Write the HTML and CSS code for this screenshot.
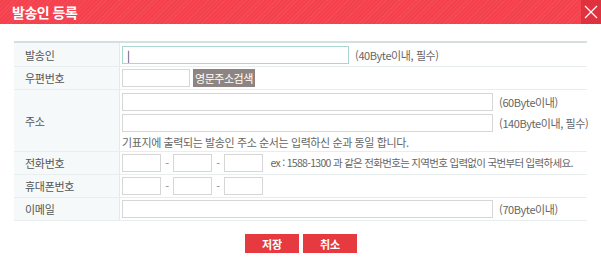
FILE: index.html
```html
<!DOCTYPE html>
<html lang="ko">
  <head>
    <meta charset="UTF-8" />
    <title>발송인 등록</title>
    <link rel="stylesheet" href="styles.css">
  </head>
  <body>
    <div class="pop-header">
      <h1>발송인 등록</h1>
      <button class="close-btn" type="button" aria-label="닫기">
        <svg width="14" height="14" viewBox="0 0 14 14">
          <path d="M1 1 L13 13 M13 1 L1 13" stroke="#fff" stroke-width="1.2" fill="none" />
        </svg>
      </button>
    </div>

    <div class="pop-body">
      <table class="form-table">
        <tr class="row-name">
          <th>발송인</th>
          <td>
            <input type="text" class="inp inp-name focus" value="|" />
            <span class="hint">(40Byte이내, 필수)</span>
          </td>
        </tr>
        <tr>
          <th>우편번호</th>
          <td>
            <input type="text" class="inp inp-zip" />
            <button type="button" class="btn-gray">영문주소검색</button>
          </td>
        </tr>
        <tr class="row-addr">
          <th>주소</th>
          <td>
            <div class="line">
              <input type="text" class="inp inp-long" />
              <span class="hint">(60Byte이내)</span>
            </div>
            <div class="line">
              <input type="text" class="inp inp-long" />
              <span class="hint">(140Byte이내, 필수)</span>
            </div>
            <p class="note">기표지에 출력되는 발송인 주소 순서는 입력하신 순과 동일 합니다.</p>
          </td>
        </tr>
        <tr>
          <th>전화번호</th>
          <td>
            <input type="text" class="inp inp-tel" />
            <span class="dash">-</span>
            <input type="text" class="inp inp-tel" />
            <span class="dash">-</span>
            <input type="text" class="inp inp-tel" />
            <span class="hint hint-tel">ex : 1588-1300 과 같은 전화번호는 지역번호 입력없이 국번부터 입력하세요.</span>
          </td>
        </tr>
        <tr>
          <th>휴대폰번호</th>
          <td>
            <input type="text" class="inp inp-tel" />
            <span class="dash">-</span>
            <input type="text" class="inp inp-tel" />
            <span class="dash">-</span>
            <input type="text" class="inp inp-tel" />
          </td>
        </tr>
        <tr>
          <th>이메일</th>
          <td>
            <input type="text" class="inp inp-long" />
            <span class="hint">(70Byte이내)</span>
          </td>
        </tr>
      </table>

      <div class="btn-area">
        <button type="button" class="btn-red">저장</button>
        <button type="button" class="btn-red">취소</button>
      </div>
    </div>
  </body>
</html>
```

FILE: styles.css
```css
body {
  margin: 0;
  background: #fff;
  font-family: "Noto Sans CJK KR", "Noto Sans", sans-serif;
  font-size: 11px;
  line-height: 14px;
  color: #555;
}
.pop-header {
  height: 24px;
  display: flex;
  align-items: center;
  justify-content: space-between;
  background-color: #f5404d;
  background-image: repeating-linear-gradient(
    -45deg,
    rgba(255, 255, 255, 0.06) 0,
    rgba(255, 255, 255, 0.06) 1px,
    transparent 1px,
    transparent 3px
  );
}
.pop-header h1 {
  margin: 0 0 0 12px;
  font-size: 14px;
  line-height: 18px;
  font-weight: bold;
  color: #fff;
  letter-spacing: -0.5px;
}
.close-btn {
  width: 20px;
  height: 24px;
  padding: 0;
  border: none;
  background: #e0313e;
  display: flex;
  align-items: center;
  justify-content: center;
  cursor: pointer;
}
.pop-body {
  padding: 17px 14px 0 14px;
}
.form-table {
  width: 573px;
  border-collapse: collapse;
  border-top: 2px solid #d5dfdf;
  table-layout: fixed;
}
.form-table th,
.form-table td {
  border-bottom: 1px solid #e8eded;
  padding: 0;
  height: 22px;
  white-space: nowrap;
}
.form-table th {
  width: 94px;
  padding-left: 11px;
  background: #f5f9f9;
  border-right: 1px solid #e3eaea;
  text-align: left;
  font-weight: normal;
  color: #555;
  letter-spacing: -0.3px;
}
.form-table td {
  padding-left: 2px;
}
.row-name td,
.row-name th {
  height: 23px;
}
.inp {
  box-sizing: border-box;
  height: 18px;
  margin: 0;
  padding: 0 4px;
  border: 1px solid #d6d6d6;
  background: #fff;
  font-family: inherit;
  font-size: 11px;
  line-height: 14px;
  color: #333;
  vertical-align: middle;
}
.inp.focus {
  border-color: #a9d6cf;
}
.inp-name {
  width: 227px;
}
.inp-zip {
  width: 68px;
}
.inp-long {
  width: 371px;
}
.inp-tel {
  width: 39px;
}
.hint {
  margin-left: 3px;
  color: #666;
  vertical-align: middle;
  letter-spacing: -0.4px;
}
.hint-tel {
  margin-left: 4px;
  font-size: 10.5px;
  letter-spacing: -0.7px;
}
.dash {
  display: inline-block;
  width: 6px;
  text-align: center;
  vertical-align: middle;
  color: #888;
}
.btn-gray {
  height: 18px;
  margin-left: 0;
  padding: 0 2px;
  border: none;
  background: #8e8482;
  color: #fff;
  font-family: inherit;
  font-size: 11px;
  line-height: 14px;
  letter-spacing: -0.5px;
  vertical-align: middle;
}
.row-addr td {
  padding-top: 3px;
  padding-bottom: 2px;
}
.line {
  height: 18px;
  margin-bottom: 3px;
}
.line + .line {
  margin-bottom: 0;
}
.note {
  margin: 3px 0 0 0;
  color: #666;
  letter-spacing: -0.4px;
}
.btn-area {
  display: flex;
  justify-content: center;
  gap: 4px;
  margin-top: 13px;
  padding-left: 1px;
}
.btn-red {
  width: 54px;
  height: 19px;
  padding: 0;
  border: none;
  background: #e63a40;
  color: #fff;
  font-family: inherit;
  font-size: 11px;
  line-height: 14px;
  font-weight: bold;
}
```
